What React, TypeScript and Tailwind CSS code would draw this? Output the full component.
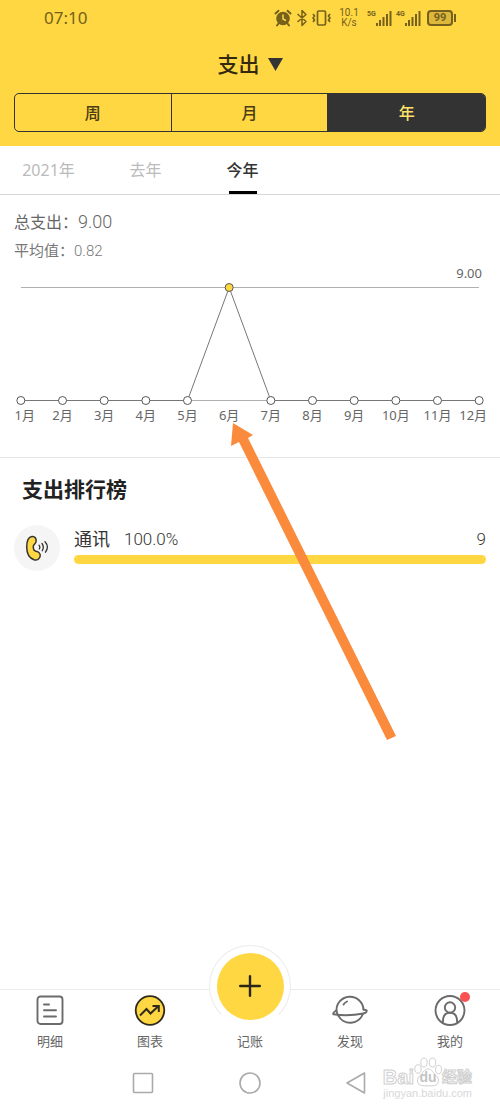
import React, { useState } from 'react';

const months = [
    { label: '1月', amount: 0 },
    { label: '2月', amount: 0 },
    { label: '3月', amount: 0 },
    { label: '4月', amount: 0 },
    { label: '5月', amount: 0 },
    { label: '6月', amount: 9 },
    { label: '7月', amount: 0 },
    { label: '8月', amount: 0 },
    { label: '9月', amount: 0 },
    { label: '10月', amount: 0 },
    { label: '11月', amount: 0 },
    { label: '12月', amount: 0 },
];

const MAX_AMOUNT = 9;
const CHART_TOP = 6.5;
const CHART_BOTTOM = 119.5;

const SignalBars = () => (
    <svg width="16" height="16" viewBox="0 0 16 16" fill="currentColor" aria-hidden="true">
        <rect x="0" y="13" width="2" height="3" />
        <rect x="3" y="10" width="2" height="6" />
        <rect x="6.500" y="7" width="2" height="9" />
        <rect x="10" y="4" width="2" height="12" />
        <rect x="13.500" y="1" width="2" height="15" />
    </svg>
);

const StatusBar = () => (
    <div className="flex h-9 items-center justify-between pr-11 pl-11 text-[#75601c]">
        <span className="font-['Noto_Sans','Noto_Sans_CJK_SC',sans-serif] text-[17px]">07:10</span>
        <div className="flex items-center gap-1">
            {/* alarm */}
            <svg width="18" height="18" viewBox="0 0 18 18" aria-hidden="true">
                <circle cx="9" cy="9.500" r="6.800" fill="currentColor" />
                <path d="M1.500 4.500 4.500 1.800M16.500 4.500 13.500 1.800M4.500 14.500 3 16.500M13.500 14.500 15 16.500" stroke="currentColor" strokeWidth="2" strokeLinecap="round" />
                <path d="M9 5.500V10L12 11.500" stroke="#ffd742" strokeWidth="1.500" fill="none" />
            </svg>
            {/* bluetooth */}
            <svg width="12" height="18" viewBox="0 0 12 18" fill="none" stroke="currentColor" strokeWidth="1.500" aria-hidden="true">
                <path d="M1.500 5 10 12.500 6 16.500V1.500L10 5.500 1.500 13" strokeLinejoin="round" />
            </svg>
            {/* vibrate */}
            <svg width="19" height="18" viewBox="0 0 19 18" fill="none" stroke="currentColor" strokeWidth="1.700" aria-hidden="true">
                <rect x="5.500" y="2" width="8" height="14" rx="1.200" />
                <path d="M1 5 2.500 7 1 9 2.500 11 1 13M18 5 16.500 7 18 9 16.500 11 18 13" />
            </svg>
            <span className="ml-1 flex w-5 flex-col items-center font-[Roboto,sans-serif] text-[10px] leading-[10px]">
                <span>10.1</span>
                <span>K/s</span>
            </span>
            <span className="ml-1 flex items-center">
                <span className="w-[9px] self-start font-[Roboto,sans-serif] text-[7px] leading-[8px] font-bold">5G</span>
                <SignalBars />
            </span>
            <span className="flex items-center">
                <span className="w-[9px] self-start font-[Roboto,sans-serif] text-[7px] leading-[8px] font-bold">4G</span>
                <SignalBars />
            </span>
            <span className="ml-[2px] flex items-center gap-px">
                <span className="flex h-4 w-[26px] items-center justify-center rounded-sm border-2 border-current bg-[#dcb73c] font-[Roboto,sans-serif] text-[11px] leading-3 font-bold">
                    99
                </span>
                <span className="h-2 w-[2px] bg-current" />
            </span>
        </div>
    </div>
);

const TrendChart = () => {
    const step = 500 / months.length;
    const points = months.map((month, i) => ({
        ...month,
        x: step * (i + 0.5),
        y: CHART_BOTTOM - (month.amount / MAX_AMOUNT) * (CHART_BOTTOM - CHART_TOP),
    }));

    return (
        <div>
            <p className="px-[18px] text-right font-['Noto_Sans',sans-serif] text-[13px] leading-4 text-[#666]">9.00</p>
            <svg viewBox="0 0 500 126" className="block w-full" role="img" aria-label="年支出">
                <path d="M21 6.500H479" stroke="#b0b0b0" />
                <path d="M21 119.500H479" stroke="#b0b0b0" />
                <polyline points={points.map(p => `${p.x},${p.y}`).join(' ')} fill="none" stroke="#777" strokeWidth="1" />
                {points.map(p => (
                    <circle key={p.label} cx={p.x} cy={p.y} r="4" fill={p.amount > 0 ? '#ffd742' : '#fff'} stroke="#555" />
                ))}
            </svg>
            <div className="grid grid-cols-12 text-center font-['Noto_Sans','Noto_Sans_CJK_SC',sans-serif] text-[13px] leading-4 text-[#666]">
                {months.map(month => (
                    <span key={month.label} className="whitespace-nowrap first:pl-2 last:pr-3">{month.label}</span>
                ))}
            </div>
        </div>
    );
};

const PhoneIcon = () => (
    <svg width="26" height="28" viewBox="0 0 26 28" fill="none" aria-hidden="true">
        <path
            d="M8 2.600C11 2.200 12.400 4.500 12.100 7.500C11.800 9.800 9.600 10 9.300 12.200C9.100 14.700 10.200 16.800 12 17.200C14.200 17.500 16.500 19.200 16.200 22C15.800 25 13 26.500 10 25.700C5 24 2.700 19 2.700 13C2.700 7.500 4 3.200 8 2.600Z"
            fill="#ffd742" stroke="#333" strokeWidth="1.500"
        />
        <path d="M15 11.200Q16.500 13 15.300 15M18 9.500Q20.500 13 18.300 16.700M21 7.800Q25.500 12.500 21.500 18.200" stroke="#333" strokeWidth="1.300" strokeLinecap="round" />
    </svg>
);

const ListIcon = () => (
    <svg width="32" height="32" viewBox="0 0 32 32" fill="none" stroke="#6b6b6b" strokeWidth="1.900" strokeLinecap="round" aria-hidden="true">
        <rect x="3.500" y="1.500" width="25" height="27.500" rx="3" />
        <path d="M10 9.500H15M10 15.300H22M10 21.500H22" />
    </svg>
);

const ChartIcon = () => (
    <svg width="32" height="32" viewBox="0 0 32 32" fill="none" stroke="#2f2a1c" strokeWidth="2" aria-hidden="true">
        <circle cx="16" cy="15.500" r="14.300" fill="#ffd742" strokeWidth="1.800" />
        <path d="M6 20.500 12.500 14 16.500 18.500 24.500 11M18.500 11H24.800V17" />
    </svg>
);

const PlanetIcon = () => (
    <svg width="36" height="32" viewBox="0 0 36 32" fill="none" stroke="#6b6b6b" strokeWidth="1.900" strokeLinecap="round" aria-hidden="true">
        <path d="M4.500 16A13.500 13.500 0 0 1 31.500 14.500M31 18.500A13.500 13.500 0 0 1 6 20" />
        <path d="M4.300 15.500Q.3 18 1.500 19.300Q16 21.500 31.500 18.500Q35.500 17.300 34.500 15.200L31.500 14.500M4.300 15.500 5.800 19.800" />
        <path d="M11.500 9.500Q12.800 7.500 15 6.500" />
    </svg>
);

const ProfileIcon = () => (
    <svg width="32" height="32" viewBox="0 0 32 32" fill="none" stroke="#6b6b6b" strokeWidth="1.900" aria-hidden="true">
        <circle cx="16" cy="15.500" r="14.500" />
        <circle cx="16" cy="12.500" r="5.200" />
        <path d="M9 27.500V25Q9.500 17.800 16 17.800T23 25V27.500" />
    </svg>
);

const navItems = [
    { label: '明细', icon: <ListIcon /> },
    { label: '图表', icon: <ChartIcon /> },
    { label: '记账', icon: null },
    { label: '发现', icon: <PlanetIcon /> },
    { label: '我的', icon: <ProfileIcon />, hasBadge: true },
];

const BottomNav = () => (
    <nav className="grid h-[66px] grid-cols-5 border-t border-[#ececec]">
        {navItems.map(item => (
            <button key={item.label} type="button" className="relative flex flex-col items-center justify-end pb-1 text-[13px] leading-5 text-[#666]">
                {item.icon ? (
                    <span className="relative mb-1 flex h-8">
                        {item.icon}
                        {item.hasBadge && <span className="absolute -top-[3px] -right-1 size-[10px] rounded-full bg-[#fa5151]" />}
                    </span>
                ) : (
                    <span className="absolute bottom-7 flex size-[82px] items-center justify-center rounded-full border border-[#ececec] border-b-transparent bg-white">
                        <span className="flex size-[67px] items-center justify-center rounded-full bg-[#ffd742]">
                            <svg width="22" height="22" viewBox="0 0 22 22" stroke="#2b2716" strokeWidth="2.400" strokeLinecap="round" aria-hidden="true">
                                <path d="M11 1.200V20.800M1.200 11H20.800" />
                            </svg>
                        </span>
                    </span>
                )}
                <span className="relative">{item.label}</span>
            </button>
        ))}
    </nav>
);

const Watermark = () => (
    <div className="absolute top-3 right-7 flex flex-col items-end font-['Liberation_Sans','Noto_Sans_CJK_SC',sans-serif] text-[#d8d8d8]">
        <div className="flex items-center text-xl leading-5 font-bold text-white">
            <span className="[-webkit-text-stroke:1px_#cfcfcf]">Bai</span>
            <span className="relative flex w-7 justify-center text-sm leading-5 text-[#c4c4c4]">
                <svg width="28" height="30" viewBox="0 0 28 30" className="absolute -top-[10px] left-0" fill="#fff" stroke="#cfcfcf" aria-hidden="true">
                    <ellipse cx="4" cy="12" rx="3.200" ry="4.200" />
                    <ellipse cx="10" cy="5.500" rx="3.200" ry="4.500" />
                    <ellipse cx="18.500" cy="5.500" rx="3.200" ry="4.500" />
                    <ellipse cx="24.500" cy="12.500" rx="3" ry="4.200" />
                    <path d="M14 12C18 12 19 16 22 18.500C26 21.500 25 28 20.500 28.500C17 29 11 29 7.500 28.500C3 28 2 21.500 6 18.500C9 16 10 12 14 12Z" />
                </svg>
                <span className="relative">du</span>
            </span>
            <span className="text-[15px] [-webkit-text-stroke:1px_#cfcfcf]">经验</span>
        </div>
        <span className="text-[11px] leading-3">jingyan.baidu.com</span>
    </div>
);

const App: React.FC = () => {
    const [period, setPeriod] = useState('年');
    const [year, setYear] = useState('今年');

    return (
        <div className="relative flex min-h-screen flex-col bg-white font-['Noto_Sans','Noto_Sans_CJK_SC',sans-serif]">
            {/* Header */}
            <header className="bg-[#ffd742] pb-[14px]">
                <StatusBar />
                <button type="button" className="mx-auto flex h-[57px] items-center gap-2 text-[21px] font-medium text-[#33290f]">
                    支出
                    <svg width="15" height="14" viewBox="0 0 15 14" fill="#333" aria-hidden="true">
                        <path d="M0 0H15L7.500 13Z" />
                    </svg>
                </button>
                <div className="mx-[14px] grid h-[39px] grid-cols-3 divide-x divide-[#333] overflow-hidden rounded-[5px] border border-[#333]">
                    {['周', '月', '年'].map(item => (
                        <button
                            key={item}
                            type="button"
                            onClick={() => setPeriod(item)}
                            className={`text-base font-medium ${period === item ? 'bg-[#333] text-[#ffe26b]' : 'text-[#4a3c14]'}`}
                        >
                            {item}
                        </button>
                    ))}
                </div>
            </header>

            {/* Year tabs */}
            <div className="flex h-[49px] border-b border-[#d8d8d8]">
                {['2021年', '去年', '今年'].map(item => (
                    <button
                        key={item}
                        type="button"
                        onClick={() => setYear(item)}
                        className={`relative flex w-[97px] items-center justify-center text-base ${year === item ? 'font-medium text-[#333]' : 'text-[#bbb]'}`}
                    >
                        {item}
                        {year === item && <span className="absolute bottom-0 h-[3px] w-7 bg-black" />}
                    </button>
                ))}
            </div>

            {/* Summary and trend */}
            <section className="border-b border-[#e6e8e8] pt-[13px] pb-[34px]">
                <p className="px-[14px] text-base leading-7 text-[#666]">
                    总支出：<span className="font-[Roboto,sans-serif] text-lg leading-7 font-light">9.00</span>
                </p>
                <p className="px-[14px] text-[15px] leading-7 text-[#777]">
                    平均值：<span className="font-[Roboto,sans-serif] font-light">0.82</span>
                </p>
                <TrendChart />
            </section>

            {/* Ranking */}
            <main className="flex-1 pt-[15px]">
                <h2 className="px-[22px] text-[21px] leading-8 font-bold text-[#222]">支出排行榜</h2>
                <div className="mt-5 flex items-start gap-[14px] px-[14px]">
                    <span className="flex size-[46px] shrink-0 items-center justify-center rounded-full bg-[#f5f5f5]">
                        <PhoneIcon />
                    </span>
                    <div className="flex-1">
                        <div className="flex items-center leading-7 text-[#333]">
                            <span className="text-lg leading-7">通讯</span>
                            <span className="ml-[14px] font-[Roboto,sans-serif] text-[17px] font-light">100.0%</span>
                            <span className="ml-auto font-[Roboto,sans-serif] text-[17px] font-light">9</span>
                        </div>
                        <div className="mt-[2px] h-[9px] rounded-full bg-[#ffd742]" />
                    </div>
                </div>
            </main>

            <BottomNav />

            {/* System navigation */}
            <div className="relative flex h-14 items-center justify-center gap-[85px]">
                <svg width="22" height="22" viewBox="0 0 22 22" fill="none" stroke="#aaa" strokeWidth="1.600" aria-hidden="true">
                    <rect x="1.500" y="1.500" width="19" height="19" rx="1" />
                </svg>
                <svg width="22" height="22" viewBox="0 0 22 22" fill="none" stroke="#aaa" strokeWidth="1.600" aria-hidden="true">
                    <circle cx="11" cy="11" r="10" />
                </svg>
                <svg width="22" height="22" viewBox="0 0 22 22" fill="none" stroke="#aaa" strokeWidth="1.600" strokeLinejoin="round" aria-hidden="true">
                    <path d="M18.500 1V21L1 11Z" />
                </svg>
                <Watermark />
            </div>

            {/* Pointer to the June label */}
            <svg width="170" height="322" viewBox="0 0 170 322" className="pointer-events-none absolute top-[420px] left-[228px]" fill="#fb8b3c" aria-hidden="true">
                <path d="M5 3 25 15 20 18 168 316 159 320 11 22 3 26Z" />
            </svg>
        </div>
    );
};

export default App;
